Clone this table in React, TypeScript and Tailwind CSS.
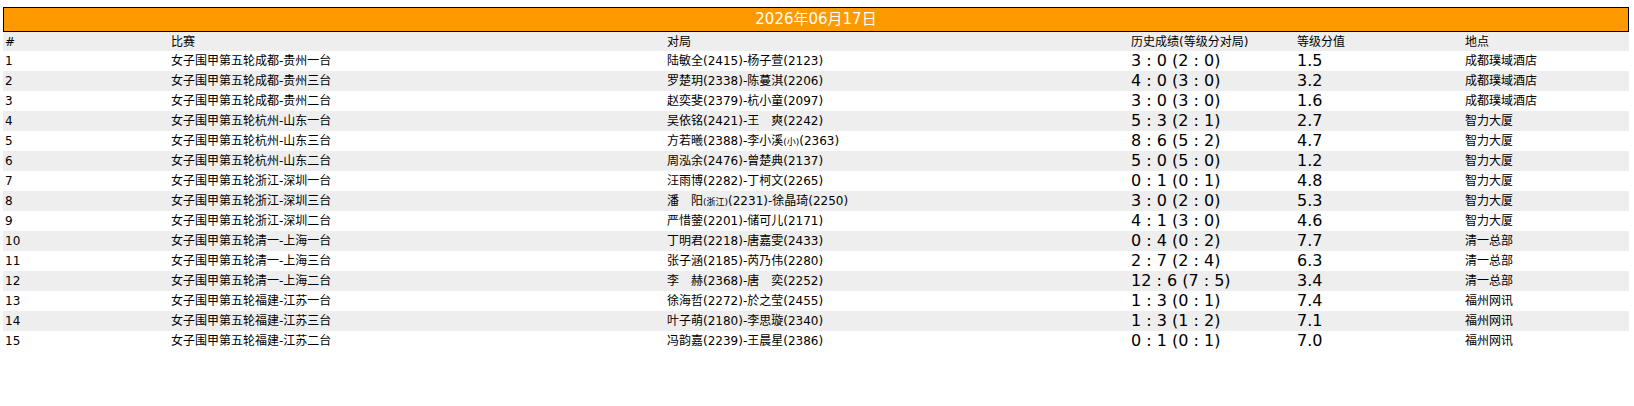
import React from 'react';

type Game = {
  id: number;
  match: string;
  players: React.ReactNode;
  history: string;
  rating: string;
  venue: string;
};

const Small = ({ children }: { children: React.ReactNode }) => (
  <span className="text-[9px]">{children}</span>
);

const prefix = '女子围甲第五轮';

const games: Game[] = [
  { id: 1, match: '成都-贵州一台', players: '陆敏全(2415)-杨子萱(2123)', history: '3 : 0 (2 : 0)', rating: '1.5', venue: '成都璞域酒店' },
  { id: 2, match: '成都-贵州三台', players: '罗楚玥(2338)-陈蔓淇(2206)', history: '4 : 0 (3 : 0)', rating: '3.2', venue: '成都璞域酒店' },
  { id: 3, match: '成都-贵州二台', players: '赵奕斐(2379)-杭小童(2097)', history: '3 : 0 (3 : 0)', rating: '1.6', venue: '成都璞域酒店' },
  { id: 4, match: '杭州-山东一台', players: '吴依铭(2421)-王　爽(2242)', history: '5 : 3 (2 : 1)', rating: '2.7', venue: '智力大厦' },
  {
    id: 5,
    match: '杭州-山东三台',
    players: (
      <>
        方若曦(2388)-李小溪<Small>(小)</Small>(2363)
      </>
    ),
    history: '8 : 6 (5 : 2)',
    rating: '4.7',
    venue: '智力大厦',
  },
  { id: 6, match: '杭州-山东二台', players: '周泓余(2476)-曾楚典(2137)', history: '5 : 0 (5 : 0)', rating: '1.2', venue: '智力大厦' },
  { id: 7, match: '浙江-深圳一台', players: '汪雨博(2282)-丁柯文(2265)', history: '0 : 1 (0 : 1)', rating: '4.8', venue: '智力大厦' },
  {
    id: 8,
    match: '浙江-深圳三台',
    players: (
      <>
        潘　阳<Small>(浙江)</Small>(2231)-徐晶琦(2250)
      </>
    ),
    history: '3 : 0 (2 : 0)',
    rating: '5.3',
    venue: '智力大厦',
  },
  { id: 9, match: '浙江-深圳二台', players: '严惜蓥(2201)-储可儿(2171)', history: '4 : 1 (3 : 0)', rating: '4.6', venue: '智力大厦' },
  { id: 10, match: '清一-上海一台', players: '丁明君(2218)-唐嘉雯(2433)', history: '0 : 4 (0 : 2)', rating: '7.7', venue: '清一总部' },
  { id: 11, match: '清一-上海三台', players: '张子涵(2185)-芮乃伟(2280)', history: '2 : 7 (2 : 4)', rating: '6.3', venue: '清一总部' },
  { id: 12, match: '清一-上海二台', players: '李　赫(2368)-唐　奕(2252)', history: '12 : 6 (7 : 5)', rating: '3.4', venue: '清一总部' },
  { id: 13, match: '福建-江苏一台', players: '徐海哲(2272)-於之莹(2455)', history: '1 : 3 (0 : 1)', rating: '7.4', venue: '福州网讯' },
  { id: 14, match: '福建-江苏三台', players: '叶子萌(2180)-李思璇(2340)', history: '1 : 3 (1 : 2)', rating: '7.1', venue: '福州网讯' },
  { id: 15, match: '福建-江苏二台', players: '冯韵嘉(2239)-王晨星(2386)', history: '0 : 1 (0 : 1)', rating: '7.0', venue: '福州网讯' },
];

export default function App() {
  return (
    <div className="min-h-[406px] bg-white pt-[7px] pl-[3px] pr-[5px] text-[12px] text-black [font-family:'DejaVu_Sans','Noto_Sans_CJK_SC',sans-serif]">
      {/* date bar */}
      <div className="flex h-[25px] items-center justify-center border border-black bg-[#ff9900] text-[15px] leading-none text-white">
        2026年06月17日
      </div>

      <table className="w-full table-fixed border-collapse">
        <colgroup>
          <col className="w-[166px]" />
          <col className="w-[496px]" />
          <col className="w-[464px]" />
          <col className="w-[166px]" />
          <col className="w-[168px]" />
          <col className="w-[166px]" />
        </colgroup>
        <thead>
          <tr className="h-[19px] bg-[#eeeeee] text-left">
            <th className="px-[2px] font-normal">#</th>
            <th className="px-[2px] font-normal">比赛</th>
            <th className="px-[2px] font-normal">对局</th>
            <th className="px-[2px] font-normal">历史成绩(等级分对局)</th>
            <th className="px-[2px] font-normal">等级分值</th>
            <th className="px-[2px] font-normal">地点</th>
          </tr>
        </thead>
        <tbody>
          {games.map((g) => (
            <tr key={g.id} className={`h-[20px] ${g.id % 2 === 0 ? 'bg-[#eeeeee]' : 'bg-white'}`}>
              <td className="px-[2px] leading-none">{g.id}</td>
              <td className="px-[2px] leading-none">
                {prefix}
                {g.match}
              </td>
              <td className="px-[2px] leading-none">{g.players}</td>
              <td className="px-[2px] text-[16px] leading-none">{g.history}</td>
              <td className="px-[2px] text-[16px] leading-none">{g.rating}</td>
              <td className="px-[2px] leading-none">{g.venue}</td>
            </tr>
          ))}
        </tbody>
      </table>
    </div>
  );
}
